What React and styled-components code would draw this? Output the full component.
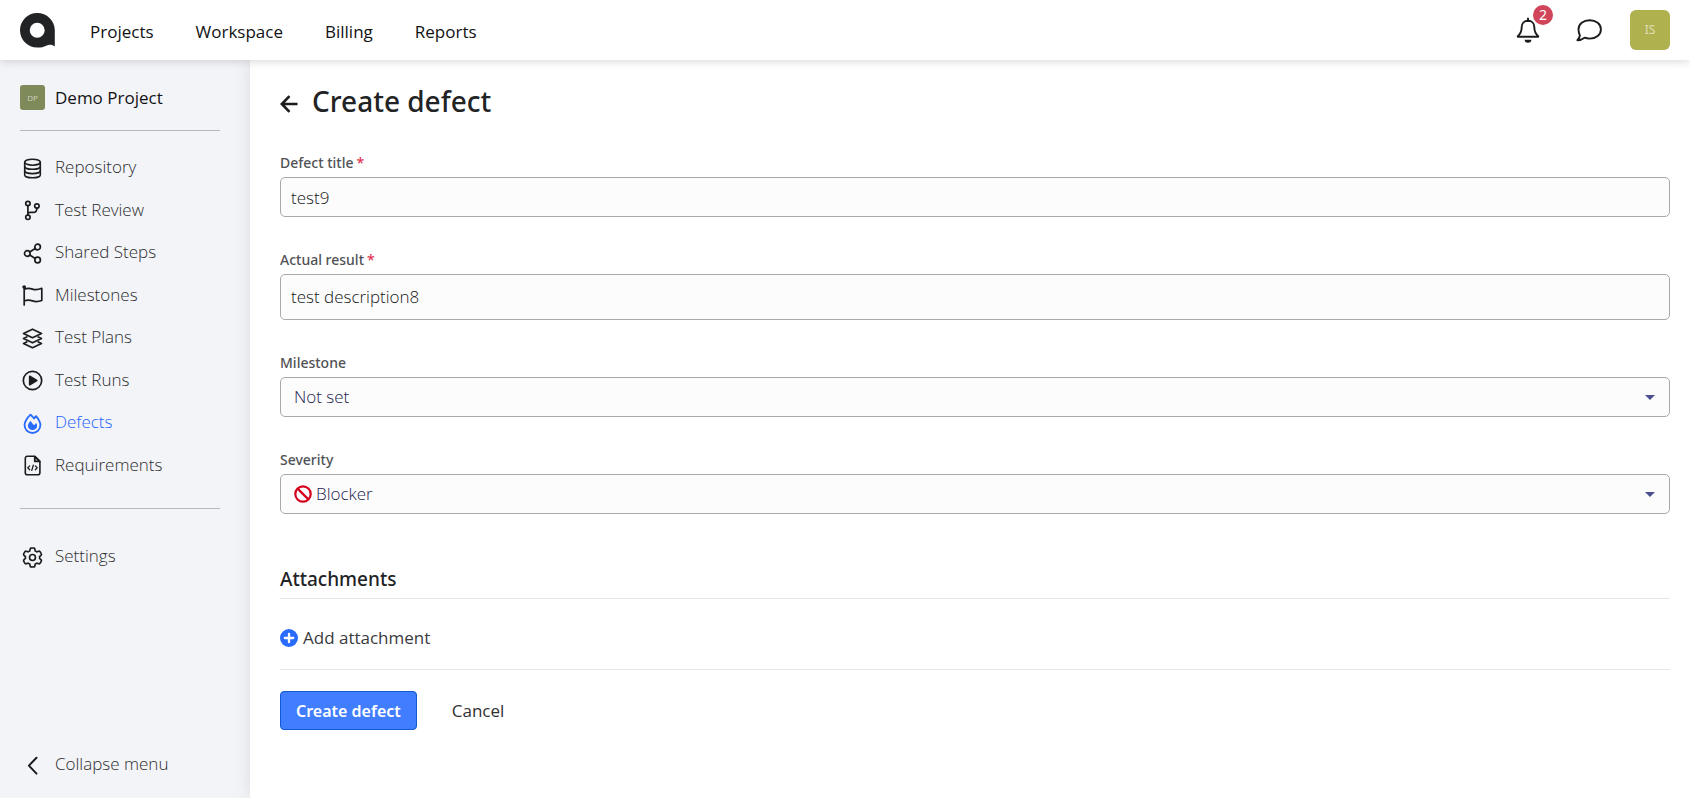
import React from "react";
import styled, { createGlobalStyle, css } from "styled-components";
import { FaGear } from "react-icons/fa6";

const GlobalStyle = createGlobalStyle`
  *, *::before, *::after { box-sizing: border-box; }
  body {
    margin: 0;
    background: #fff;
    color: #222325;
    font-family: "Noto Sans", "Open Sans", sans-serif;
    font-size: 16px;
    line-height: 24px;
  }
  button, input, textarea, select { font: inherit; color: inherit; }
  svg { display: block; flex: none; }
`;

const regular = css`
  font-family: "Open Sans", "Noto Sans", sans-serif;
  font-size: 17px;
  font-weight: 400;
`;

const light = css`
  font-family: "Open Sans", "Noto Sans", sans-serif;
  font-size: 17px;
  font-weight: 300;
`;

const Page = styled.div`
  min-height: 100vh;
  display: flex;
  flex-direction: column;
`;

const Header = styled.header`
  position: relative;
  z-index: 2;
  height: 60px;
  padding: 0 20px;
  display: flex;
  align-items: center;
  background: #fff;
  box-shadow: 0 0 10px rgba(0, 0, 0, 0.2);
`;

const LogoLink = styled.a`
  margin-right: 35px;
`;

const TopNav = styled.nav`
  display: flex;
  gap: 42px;
`;

const TopLink = styled.a`
  ${regular}
  padding-top: 3px;
  color: #111213;
  text-decoration: none;
`;

const Tools = styled.div`
  margin-left: auto;
  display: flex;
  align-items: center;
`;

const IconButton = styled.button`
  position: relative;
  width: 26px;
  height: 26px;
  margin-right: ${(p) => p.$gap}px;
  padding: 0;
  border: 0;
  background: none;
  color: #1b1c1e;
`;

const Badge = styled.span`
  position: absolute;
  top: -12px;
  right: -12px;
  width: 20px;
  height: 20px;
  border-radius: 50%;
  background: #d0455a;
  color: #fff;
  font-size: 14px;
  line-height: 20px;
  text-align: center;
`;

const Avatar = styled.span`
  width: ${(p) => p.$size}px;
  height: ${(p) => p.$size}px;
  display: flex;
  align-items: center;
  justify-content: center;
  border-radius: ${(p) => (p.$size > 30 ? 6 : 3)}px;
  background: ${(p) => p.$color};
  color: rgba(255, 255, 255, 0.6);
  font-size: ${(p) => (p.$size > 30 ? 12 : 8)}px;
  font-weight: 400;
`;

const AvatarButton = styled.button`
  padding: 0;
  border: 0;
  background: none;
`;

const Body = styled.div`
  flex: 1;
  display: flex;
`;

const Sidebar = styled.aside`
  width: 250px;
  flex: none;
  padding: 25px 30px 22px 20px;
  display: flex;
  flex-direction: column;
  background: #f3f4f7;
`;

const Project = styled.a`
  ${regular}
  height: 25px;
  display: flex;
  align-items: center;
  gap: 10px;
  color: #111213;
  text-decoration: none;
`;

const Divider = styled.hr`
  width: 100%;
  height: 1px;
  margin: ${(p) => p.$space};
  border: 0;
  background: ${(p) => p.$color};
`;

const Menu = styled.ul`
  height: ${(p) => p.$height}px;
  margin: 0;
  padding: 0;
  display: flex;
  flex-direction: column;
  list-style: none;
`;

const MenuItem = styled.li`
  flex: 1;
  display: flex;
  align-items: center;
`;

const entry = css`
  ${light}
  display: flex;
  align-items: center;
  gap: 12px;
  padding: 0 0 0 2px;
  color: ${(p) => (p.$active ? "#1f63ff" : "#2c2d30")};
  text-decoration: none;
  svg {
    margin-top: 2px;
    color: ${(p) => (p.$active ? "#2a6bff" : "#1b1c1e")};
  }
`;

const MenuLink = styled.a`
  ${entry}
`;

const CollapseButton = styled.button`
  ${entry}
  margin-top: auto;
  border: 0;
  background: none;
`;

const GearOutline = styled(FaGear)`
  width: 21px;
  height: 21px;
  padding: 1px;
  overflow: visible;
  path {
    fill: none;
    stroke: currentColor;
    stroke-width: 44px;
  }
`;

const Main = styled.main`
  position: relative;
  flex: 1;
  min-width: 0;
  padding: 20px 20px 40px 30px;
  background: #fff;
  box-shadow: 0 0 16px rgba(0, 0, 0, 0.1);
`;

const TitleRow = styled.div`
  height: 42px;
  margin-bottom: 30px;
  display: flex;
  align-items: center;
  gap: 14px;
`;

const BackLink = styled.a`
  padding-top: 6px;
  color: #1b1c1e;
`;

const Title = styled.h1`
  margin: 0;
  font-size: 28px;
  line-height: 42px;
  font-weight: 500;
`;

const Fields = styled.div`
  display: flex;
  flex-direction: column;
  gap: 32px;
`;

const Field = styled.div`
  display: flex;
  flex-direction: column;
  gap: 3px;
`;

const Label = styled.label`
  color: #505256;
  font-size: 14px;
  line-height: 22px;
  font-weight: 500;
`;

const Required = styled.span`
  margin-left: 3px;
  color: #e0213f;
  font-weight: 400;
`;

const box = css`
  ${light}
  width: 100%;
  margin: 0;
  border: 1px solid #a8a9ab;
  border-radius: 5px;
  background: #fcfcfc;
  color: #151617;
  outline: 0;
`;

const TextInput = styled.input`
  ${box}
  height: 40px;
  padding: 0 10px;
`;

const TextArea = styled.textarea`
  ${box}
  display: block;
  height: 46px;
  padding: 10px;
  resize: none;
  overflow: hidden;
`;

const SelectWrap = styled.div`
  position: relative;
`;

const Select = styled.select`
  ${box}
  display: block;
  height: 40px;
  padding: 0 40px 0 ${(p) => (p.$icon ? 35 : 13)}px;
  appearance: none;
  color: #24234f;
`;

const Overlay = styled.span`
  position: absolute;
  top: 0;
  bottom: 0;
  ${(p) => (p.$side === "left" ? "left: 14px" : "right: 15px")};
  display: flex;
  align-items: center;
  pointer-events: none;
`;

const SectionTitle = styled.h2`
  margin: 52px 0 6px;
  font-size: 19px;
  line-height: 26px;
  font-weight: 500;
`;

const AddButton = styled.button`
  ${regular}
  padding: 0;
  display: flex;
  align-items: center;
  gap: 5px;
  border: 0;
  background: none;
  color: #3a3b3e;
`;

const Actions = styled.div`
  display: flex;
  align-items: center;
  gap: 19px;
`;

const Button = styled.button`
  ${regular}
  height: 39px;
  padding: 0 15px;
  border: 1px solid transparent;
  border-radius: 4px;
  background: none;
  color: #2f3033;
`;

const PrimaryButton = styled(Button)`
  border-color: #1059d0;
  background: #417dff;
  color: #fff;
  font-family: "Noto Sans", "Open Sans", sans-serif;
  font-size: 16px;
  font-weight: 600;
`;

const Line = ({ children, size = 21, width = 1.7 }) => (
  <svg
    width={size}
    height={size}
    viewBox={`0 0 ${size} ${size}`}
    fill="none"
    stroke="currentColor"
    strokeWidth={width}
    strokeLinecap="round"
    strokeLinejoin="round"
    aria-hidden="true"
  >
    {children}
  </svg>
);

const DatabaseIcon = () => (
  <Line width={1.6}>
    <ellipse cx="10.5" cy="4.2" rx="7.8" ry="3" />
    <path d="M2.7 4.200v12.700c0 1.600 3.500 2.900 7.800 2.900s7.800-1.300 7.800-2.900V4.200" />
    <path d="M2.700 8.400c0 1.600 3.500 2.900 7.800 2.900s7.800-1.300 7.800-2.900M2.700 12.700c0 1.600 3.500 2.900 7.800 2.900s7.800-1.300 7.800-2.900" />
  </Line>
);
const BranchIcon = () => (
  <Line>
    <circle cx="5.9" cy="3.5" r="2.2" />
    <circle cx="14.9" cy="6" r="2.2" />
    <circle cx="5.9" cy="17.3" r="2.2" />
    <path d="M5.9 5.7v9.4M14.9 8.2c0 3-1.2 4.2-3.7 4.2H8.4c-1.6 0-2.5.7-2.5 2.2" />
  </Line>
);
const ShareIcon = () => (
  <Line>
    <circle cx="15.6" cy="4" r="2.8" />
    <circle cx="5.3" cy="10.5" r="2.8" />
    <circle cx="15.6" cy="17" r="2.8" />
    <path d="M7.7 9l5.5-3.5M7.7 12l5.5 3.5" />
  </Line>
);
const FlagIcon = () => (
  <Line>
    <circle cx="2.2" cy="2" r="1" fill="currentColor" />
    <path d="M2.2 2v18M2.2 4.2c3-1.2 5.400-1.100 8.300-.1s5.800.7 9.300-.8v12.200c-3.500 1.300-6.300 1.400-9.300.400s-5.300-1-8.300.1" />
  </Line>
);
const LayersIcon = () => (
  <Line>
    <path d="M10.500 1.200l9 4.300-9 4.200-9-4.200z" />
    <path d="M4.800 8.900l-3.300 1.700 9 4.200 9-4.200-3.300-1.700" />
    <path d="M4.800 13.900l-3.300 1.600 9 4.200 9-4.200-3.300-1.600" />
  </Line>
);
const PlayIcon = () => (
  <Line>
    <circle cx="10.5" cy="10.5" r="9.200" />
    <path d="M7.700 6.300v8.400l7-4.200z" fill="currentColor" />
  </Line>
);
const FireIcon = () => (
  <svg width="21" height="21" viewBox="-32 0 512 512" aria-hidden="true">
    <path
      transform="translate(13 28) scale(.94)"
      fill="none"
      stroke="currentColor"
      strokeWidth="48"
      strokeLinejoin="round"
      d="M173 12c32 30 64 64 92 102 15-20 33-42 51-60 33 32 60 72 80 112 20 41 34 82 34 111C430 394 338 490 224 490 108 490 18 394 18 277c0-38 17-82 43-126C89 105 127 55 173 12z"
    />
    <path
      fill="currentColor"
      d="M225.700 416c25.300 0 52-9 72-24c42.100-29.400 48-88 24-134c-5-9-15-9-21-1l-26 30c-7 7-18 7-25-.5c-16-21-46-58-63-80c-6-8-18-8-25 0c-34 43-51 76-51 107C111 375 162 416 225.700 416z"
    />
  </svg>
);
const FileCodeIcon = () => (
  <Line width={1.6}>
    <path d="M5.300 1.200h7.600l5 5v11.600a2 2 0 0 1-2 2H5.300a2 2 0 0 1-2-2V3.200a2 2 0 0 1 2-2z" />
    <path d="M12.700 1.500v4.900h5z" fill="currentColor" fillOpacity=".3" />
    <path strokeWidth="1.300" d="M7.700 10.900l-1.900 1.900 1.900 1.900M13.300 10.900l1.900 1.900-1.900 1.900M11.300 10.200l-1.500 5.200" />
  </Line>
);
const ChevronIcon = () => (
  <Line width={2}>
    <path d="M14.500 2.800L6.900 10.600l7.600 8" />
  </Line>
);
const BellIcon = () => (
  <Line size={26} width={1.9}>
    <path d="M13 1.500v2M13 3.800c-3.900 0-6.300 2.800-6.300 6.300 0 4.600-1.400 7-3.900 9.200v.4h20.400v-.4c-2.500-2.200-3.900-4.600-3.900-9.200 0-3.500-2.400-6.300-6.300-6.300z" />
    <path stroke="none" fill="currentColor" d="M9.600 22.800h6.800a3.400 3 0 0 1-6.800 0z" />
  </Line>
);
const CommentIcon = () => (
  <Line size={26} width={1.9}>
    <path d="M13.700 3.200c6.400 0 11.200 4 11.200 9.200s-4.800 9.200-11.200 9.200c-1.900 0-3.600-.3-5.100-.9-2 1.500-4.400 2.500-7.200 2.500 1.300-1.300 2.200-2.900 2.500-4.700C3.100 16.500 2.500 14.600 2.500 12.400 2.500 7.200 7.300 3.200 13.700 3.200z" />
  </Line>
);
const ArrowIcon = () => (
  <svg width="18" height="18" viewBox="0 0 18 18" fill="none" stroke="currentColor" strokeWidth="2.600" aria-hidden="true">
    <path d="M17.500 9H2M9.500 1.200L1.800 9l7.700 7.800" />
  </svg>
);
const PlusIcon = () => (
  <svg width="18" height="18" viewBox="0 0 18 18" aria-hidden="true">
    <circle cx="9" cy="9" r="9" fill="#2a6bff" />
    <path d="M9 4.800v8.400M4.800 9h8.400" stroke="#fff" strokeWidth="2.300" strokeLinecap="round" />
  </svg>
);
const BlockedIcon = () => (
  <svg width="18" height="18" viewBox="0 0 18 18" fill="none" stroke="#d6001c" strokeWidth="2.200" aria-hidden="true">
    <circle cx="9" cy="9" r="7.700" />
    <path d="M3.600 3.600l10.800 10.800" />
  </svg>
);
const Caret = () => (
  <svg width="10" height="5" viewBox="0 0 10 5" fill="#4a4f8f" aria-hidden="true">
    <path d="M0 0h10L5 5z" />
  </svg>
);
const Logo = () => (
  <svg width="35" height="35" viewBox="0 0 35 35" fill="#222325" aria-hidden="true">
    <path
      fillRule="evenodd"
      d="M17.200 0C26.800 0 34.600 7.400 34.800 17v16.600c-2.600-2.300-5.600-2.300-8.600-.9-2.700 1.300-5.700 2-9 1.900C7.700 34.600 0 26.800 0 17.300S7.700 0 17.200 0zM17.200 9.800a7.500 7.500 0 1 0 0 15 7.500 7.500 0 0 0 0-15z"
    />
  </svg>
);

const topLinks = ["Projects", "Workspace", "Billing", "Reports"];
const menu = [
  ["Repository", DatabaseIcon],
  ["Test Review", BranchIcon],
  ["Shared Steps", ShareIcon],
  ["Milestones", FlagIcon],
  ["Test Plans", LayersIcon],
  ["Test Runs", PlayIcon],
  ["Defects", FireIcon],
  ["Requirements", FileCodeIcon],
];

export default function App() {
  return (
    <Page>
      <GlobalStyle />
      <Header>
        <LogoLink href="#" aria-label="Home"><Logo /></LogoLink>
        <TopNav>
          {topLinks.map((name) => (
            <TopLink key={name} href="#">{name}</TopLink>
          ))}
        </TopNav>
        <Tools>
          <IconButton $gap={35} aria-label="Notifications">
            <BellIcon />
            <Badge>2</Badge>
          </IconButton>
          <IconButton $gap={28} aria-label="Messages"><CommentIcon /></IconButton>
          <AvatarButton aria-label="Account">
            <Avatar $size={40} $color="#afb04e">IS</Avatar>
          </AvatarButton>
        </Tools>
      </Header>
      <Body>
        <Sidebar>
          <Project href="#">
            <Avatar $size={25} $color="#7f8a5a">DP</Avatar>
            Demo Project
          </Project>
          <Divider $space="20px 0 15px" $color="#b7b8bb" />
          <Menu $height={340}>
            {menu.map(([name, Icon]) => (
              <MenuItem key={name}>
                <MenuLink href="#" $active={name === "Defects"}>
                  <Icon />
                  {name}
                </MenuLink>
              </MenuItem>
            ))}
          </Menu>
          <Divider $space="22px 0 26px" $color="#b7b8bb" />
          <Menu $height={42}>
            <MenuItem>
              <MenuLink href="#"><GearOutline />Settings</MenuLink>
            </MenuItem>
          </Menu>
          <CollapseButton><ChevronIcon />Collapse menu</CollapseButton>
        </Sidebar>
        <Main>
          <TitleRow>
            <BackLink href="#" aria-label="Back"><ArrowIcon /></BackLink>
            <Title>Create defect</Title>
          </TitleRow>
          <Fields>
            <Field>
              <Label htmlFor="title">Defect title<Required>*</Required></Label>
              <TextInput id="title" defaultValue="test9" />
            </Field>
            <Field>
              <Label htmlFor="result">Actual result<Required>*</Required></Label>
              <TextArea id="result" rows={1} defaultValue="test description8" />
            </Field>
            <Field>
              <Label htmlFor="milestone">Milestone</Label>
              <SelectWrap>
                <Select id="milestone"><option>Not set</option></Select>
                <Overlay $side="right"><Caret /></Overlay>
              </SelectWrap>
            </Field>
            <Field>
              <Label htmlFor="severity">Severity</Label>
              <SelectWrap>
                <Select id="severity" $icon><option>Blocker</option></Select>
                <Overlay $side="left"><BlockedIcon /></Overlay>
                <Overlay $side="right"><Caret /></Overlay>
              </SelectWrap>
            </Field>
          </Fields>
          <SectionTitle>Attachments</SectionTitle>
          <Divider $space="0 0 27px" $color="#e6e7e8" />
          <AddButton><PlusIcon />Add attachment</AddButton>
          <Divider $space="19px 0 21px" $color="#e6e7e8" />
          <Actions>
            <PrimaryButton>Create defect</PrimaryButton>
            <Button>Cancel</Button>
          </Actions>
        </Main>
      </Body>
    </Page>
  );
}
